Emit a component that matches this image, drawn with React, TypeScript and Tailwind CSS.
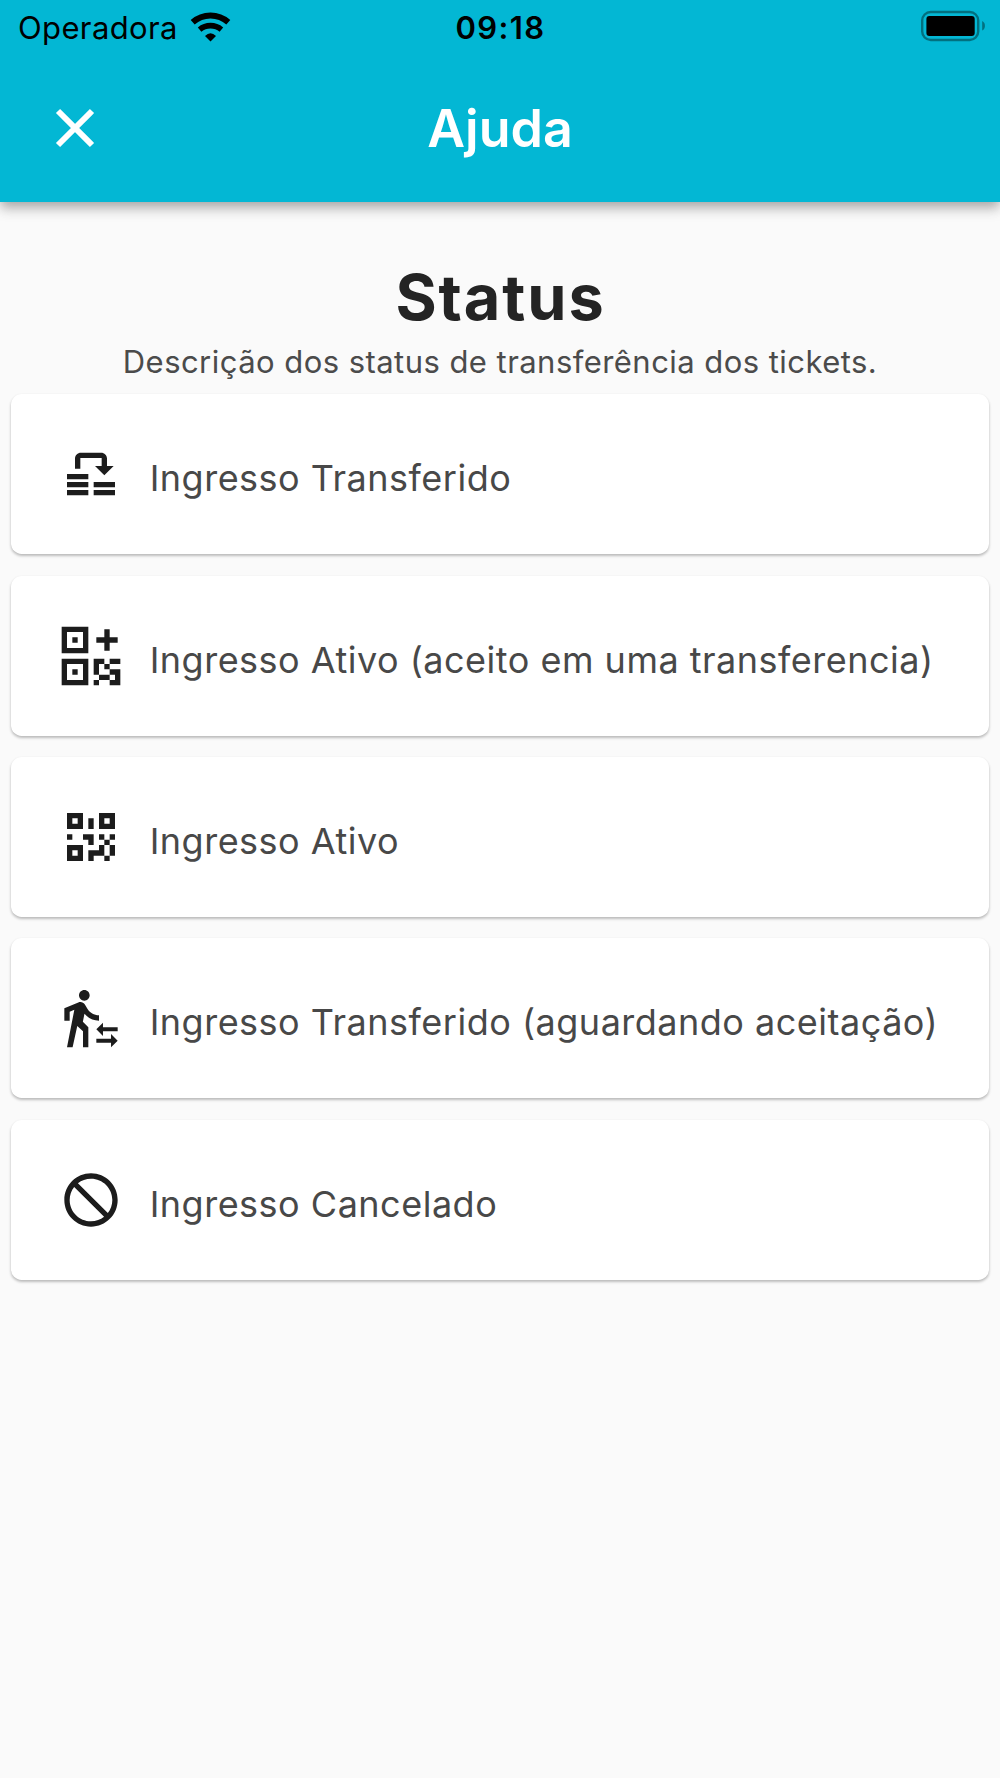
import type { ReactNode } from 'react';

const TransferIcon = () => (
  <path d="M6 10V6.2C6 5 7 4 8.2 4h7.6C17 4 18 5 18 6.2V9h2.5L17 12.5 13.5 9H16V6H8v4H6zM3 12h8v2H3v-2zM3 15h8v2H3v-2zM3 18h8v2H3v-2zM13 15h8v2h-8v-2zM13 18h8v2h-8v-2z" />
);

const QrPlusIcon = () => (
  <path
    fillRule="evenodd"
    d="M1 1h10v10H1V1zM3 3v6h6V3H3zM5 5h2v2H5V5zM1 13h10v10H1V13zM3 15v6h6v-6H3zM5 17h2v2H5v-2zM17 2h2v3h3v2h-3v3h-2V7h-3V5h3V2zM13 13h4v2h-2v4h-2v-6zM19 13h4v2h-4v-2zM17 15h2v2h-2v-2zM19 17h4v6h-4v-2h2v-2h-2v-2zM15 19h4v2h-4v-2zM13 21h2v2h-2v-2z"
  />
);

const QrIcon = () => (
  <path
    fillRule="evenodd"
    d="M3 11h2v2H3v-2zM11 5h2v4h-2V5zM9 11h4v4h-2v-2H9v-2zM15 11h2v2h2v2h-2v4h-4v2h-2v-4h4v-2h2v-2h-2v-2zM19 11h2v2h-2v-2zM19 15h2v4h-2v2h-2v-2h2v-4zM15 3h6v6h-6V3zM17 5v2h2V5h-2zM3 3h6v6H3V3zM5 5v2h2V5H5zM3 15h6v6H3v-6zM5 17v2h2v-2H5z"
  />
);

const WalkTransferIcon = () => (
  <path d="M16.49 15.5v-1.75L14 16.25l2.49 2.5V17H22v-1.5h-5.51zM19.51 19.75H14v1.5h5.51V23L22 20.5 19.51 18v1.75zM9.5 5.5c1.1 0 2-.9 2-2s-.9-2-2-2-2 .9-2 2 .9 2 2 2zM5.75 8.9L3 23h2.1l1.75-8L9 17v6h2v-7.55L8.95 13.4l.6-3C10.85 12 12.8 13 15 13v-2c-1.85 0-3.45-1-4.35-2.45l-.95-1.6C9.35 6.35 8.7 6 8 6c-.25 0-.5.05-.75.15L2 8.3V13h2V9.65l1.75-.75z" />
);

const BlockIcon = () => (
  <path d="M12 2C6.48 2 2 6.48 2 12s4.48 10 10 10 10-4.48 10-10S17.52 2 12 2zM4 12c0-4.42 3.58-8 8-8 1.85 0 3.55.63 4.9 1.69L5.69 16.9C4.63 15.55 4 13.85 4 12zm8 8c-1.85 0-3.55-.63-4.9-1.69L18.31 7.1C19.37 8.45 20 10.15 20 12c0 4.42-3.58 8-8 8z" transform="matrix(-1 0 0 1 24 0)" />
);

const statuses: { label: string; icon: ReactNode }[] = [
  { label: 'Ingresso Transferido', icon: <TransferIcon /> },
  { label: 'Ingresso Ativo (aceito em uma transferencia)', icon: <QrPlusIcon /> },
  { label: 'Ingresso Ativo', icon: <QrIcon /> },
  { label: 'Ingresso Transferido (aguardando aceitação)', icon: <WalkTransferIcon /> },
  { label: 'Ingresso Cancelado', icon: <BlockIcon /> },
];

function StatusBar() {
  return (
    <div className="grid h-[54px] grid-cols-3 items-center pl-[18px] pr-[14px] text-[31px] leading-[55px] text-black">
      <div className="flex items-center gap-[12px]">
        <span className="tracking-[0.37px]">Operadora</span>
        <svg className="-mt-[1px] h-[30px] w-[41px]" viewBox="0 0 41 30" fill="none" stroke="currentColor">
          <path d="M2.7 10.2A26.8 26.8 0 0 1 38.3 10.2" strokeWidth="6" />
          <path d="M9.6 17.6A17 17 0 0 1 31.4 17.6" strokeWidth="5.6" />
          <path d="M20.5 29.5L15 24Q20.5 18.6 26 24Z" fill="currentColor" stroke="none" />
        </svg>
      </div>
      <span className="pr-[3px] text-center font-semibold tracking-[1.4px]">09:18</span>
      <svg className="-mt-[3px] h-[32px] w-[66px] justify-self-end" viewBox="0 0 66 32">
        <rect x="2.2" y="2" width="56" height="28" rx="8.5" fill="none" stroke="#02707f" strokeWidth="2.4" />
        <rect x="6.4" y="6" width="48.3" height="20" rx="3" />
        <path d="M62.2 11c2 1 2.7 2.8 2.7 4.8s-.7 3.8-2.7 4.8z" fill="#02707f" />
      </svg>
    </div>
  );
}

export default function App() {
  return (
    <div className="min-h-[1778px] bg-[#fafafa] font-['Inter','Liberation_Sans',sans-serif]">
      <header className="h-[202.3px] bg-[#03b7d4] shadow-[0_5px_11px_-1px_rgba(0,0,0,0.26),0_8px_13px_0_rgba(0,0,0,0.12)]">
        <StatusBar />
        <div className="grid h-[148px] grid-cols-3 items-center px-[42.67px] text-white">
          <button aria-label="Fechar" className="w-16">
            <svg className="size-16" viewBox="0 0 24 24" fill="none" stroke="currentColor" strokeWidth="2.2">
              <path d="M6.4 6.4L17.6 17.6M17.6 6.4L6.4 17.6" strokeLinecap="square" />
            </svg>
          </button>
          <h1 className="pt-[2px] text-center text-[52px] font-semibold leading-[64px]">Ajuda</h1>
        </div>
      </header>

      <main className="px-[10.67px] pt-[55px]">
        <h2 className="pl-[1px] text-center text-[63px] font-bold leading-[80px] tracking-[1.9px] text-[#242424]">Status</h2>
        <p className="text-center text-[31px] leading-[49px] tracking-[0.45px] text-[#4b4b4b]">
          Descrição dos status de transferência dos tickets.
        </p>
        <ul className="mt-[8px] flex flex-col gap-[21.33px]">
          {statuses.map((s) => (
            <li
              key={s.label}
              className="flex h-[160px] items-center rounded-[10.67px] bg-white pl-[48px] shadow-[0_2px_3px_0_rgba(0,0,0,0.22),0_1px_3px_0_rgba(0,0,0,0.07)]"
            >
              <svg className="size-16 shrink-0 text-[#1c1c1c]" viewBox="0 0 24 24" fill="currentColor">
                {s.icon}
              </svg>
              <span className="ml-[27px] whitespace-nowrap pt-[8px] text-[36px] leading-[48px] tracking-[0.5px] text-[#484848]">
                {s.label}
              </span>
            </li>
          ))}
        </ul>
      </main>
    </div>
  );
}
